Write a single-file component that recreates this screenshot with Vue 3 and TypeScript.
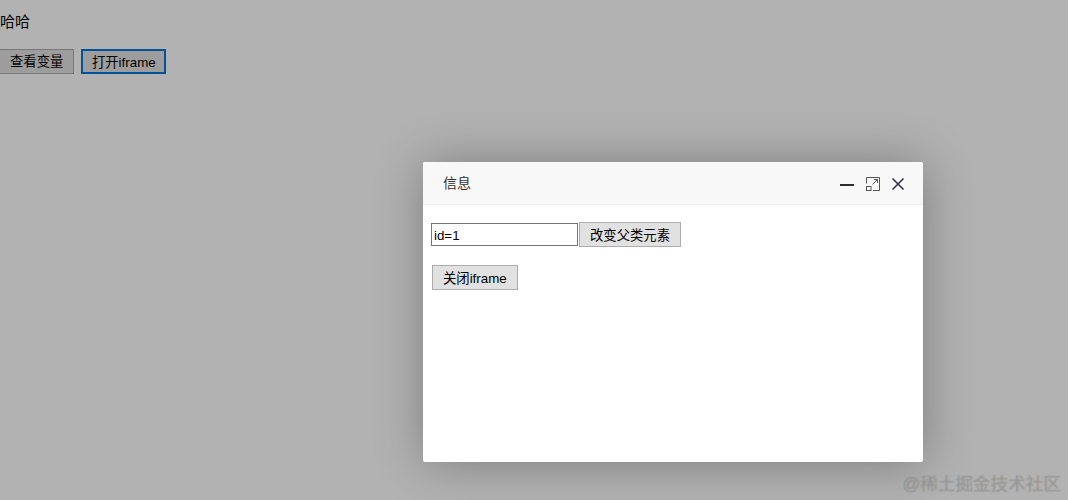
<script setup lang="ts">
const title: string = '信息'
</script>

<template>
  <div class="page">
    <p class="greet">哈哈</p>
    <div class="actions">
      <button class="btn">查看变量</button>
      <button class="btn focused">打开iframe</button>
    </div>
    <div class="shade"></div>
    <section class="dialog">
      <header class="dialog-head">
        <span class="dialog-title">{{ title }}</span>
        <div class="tools">
          <svg width="16" height="16" viewBox="0 0 16 16"><path d="M1 10h14" stroke="#2e2d3c" stroke-width="2" fill="none" /></svg>
          <svg width="16" height="16" viewBox="0 0 16 16" fill="none" stroke="#555" stroke-width="1">
            <path d="M2.500 8.500V2.500h13v13H9" />
            <rect x="2.500" y="11.500" width="4.500" height="4" />
            <path d="M8.500 9.500l5-5M10 4.500h3.500V8" />
          </svg>
          <svg width="16" height="16" viewBox="0 0 16 16"><path d="M3.500 3.500l11 11M14.500 3.500l-11 11" stroke="#2e2d3c" stroke-width="1.5" fill="none" /></svg>
        </div>
      </header>
      <div class="dialog-body">
        <div class="row">
          <input class="field" value="id=1" />
          <button class="btn inner">改变父类元素</button>
        </div>
        <button class="btn inner close">关闭iframe</button>
      </div>
    </section>
    <div class="mark">@稀土掘金技术社区</div>
  </div>
</template>

<style>
html, body { margin: 0; padding: 0; }
</style>

<style scoped>
.page {
  position: relative;
  width: 1068px;
  height: 500px;
  overflow: hidden;
  background: #fff;
  font-family: "Liberation Sans", "Noto Sans CJK SC", sans-serif;
  color: #000;
}
.greet {
  margin: 0;
  padding-top: 11px;
  font-size: 15px;
  line-height: 22px;
}
.actions {
  display: flex;
  gap: 7px;
  margin: 16px 0 0 -1px;
}
.btn {
  box-sizing: border-box;
  height: 25px;
  padding: 0 10px;
  border: 1px solid #adadad;
  background: #e1e1e1;
  font: 13.33px/23px "Liberation Sans", "Noto Sans CJK SC", sans-serif;
  color: #000;
}
.inner {
  padding-top: 1px;
}
.focused {
  width: 85px;
  border: 2px solid #0078d7;
  padding: 0;
}
.shade {
  position: absolute;
  inset: 0;
  background: rgba(0, 0, 0, 0.3);
}
.dialog {
  position: absolute;
  left: 423px;
  top: 162px;
  width: 500px;
  height: 300px;
  background: #fff;
  border-radius: 2px;
  box-shadow: 1px 1px 50px rgba(0, 0, 0, 0.3);
}
.dialog-head {
  box-sizing: border-box;
  display: flex;
  align-items: center;
  justify-content: space-between;
  height: 43px;
  padding: 0 18px 0 20px;
  background: #f8f8f8;
  border-bottom: 1px solid #eee;
  border-radius: 2px 2px 0 0;
}
.dialog-title {
  font-size: 14px;
  color: #333;
  padding-bottom: 2px;
}
.tools {
  display: flex;
  align-items: center;
  gap: 9px;
}
.dialog-body {
  padding: 17px 8px 0;
}
.row {
  display: flex;
  align-items: center;
  gap: 1px;
}
.field {
  box-sizing: border-box;
  width: 147px;
  height: 23px;
  padding: 2px 2px 0;
  margin: 0;
  border: 1px solid #767676;
  background: #fff;
  outline: none;
  font: 13.33px "Liberation Sans", "Noto Sans CJK SC", sans-serif;
  color: #000;
}
.close {
  display: block;
  margin: 18px 0 0 1px;
}
.mark {
  position: absolute;
  right: 7px;
  bottom: 5px;
  font-size: 17.6px;
  line-height: 22px;
  color: rgba(255, 255, 255, 0.25);
  text-shadow: 0 0 1px rgba(0, 0, 0, 0.35);
}
</style>
